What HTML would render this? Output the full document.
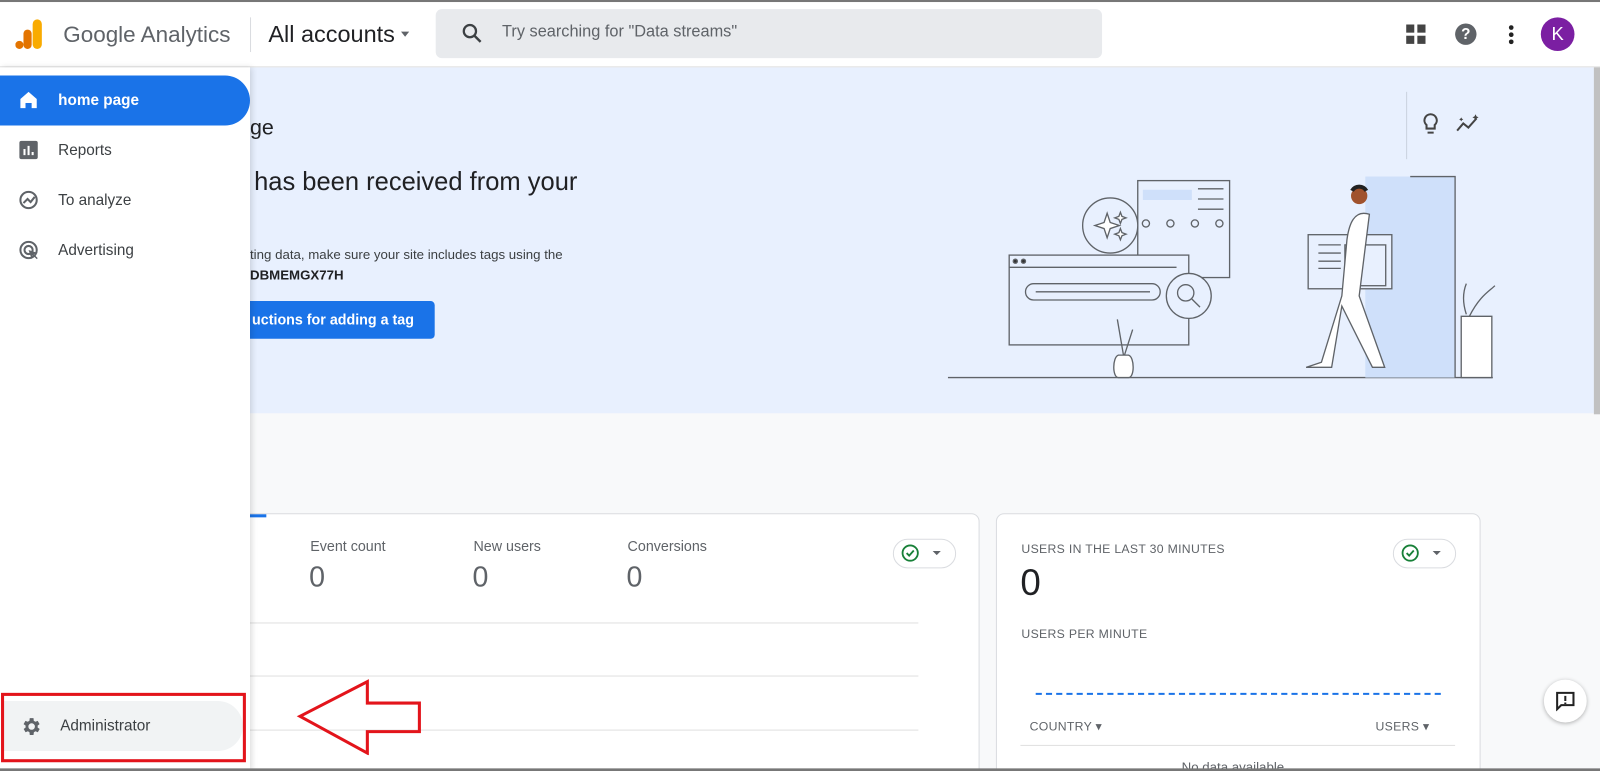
<!DOCTYPE html>
<html><head><meta charset="utf-8"><style>
*{box-sizing:border-box;margin:0;padding:0}
html,body{width:1600px;height:771px;overflow:hidden;background:#f8f9fa}
#wrap{position:absolute;left:0;top:0;width:1568px;height:756px;overflow:hidden;transform:scale(1.020408);transform-origin:0 0;font-family:"Liberation Sans",Arial,sans-serif;color:#202124;background:#f8f9fa}
.abs{position:absolute}
#hdr{left:0;top:0;width:1568px;height:66px;background:#fff;border-top:2px solid #777;border-bottom:1px solid #e0e0e0}
#banner{left:245px;top:66px;width:1317px;height:339px;background:#e8f0fe}
#side{left:0;top:66px;width:245px;height:690px;background:#fff;box-shadow:2px 0 6px rgba(0,0,0,.15)}
.nav{position:absolute;left:0;width:245px;height:49px;font-size:15px;color:#3c4043;display:flex;align-items:center;padding-left:57px}
.nav svg{position:absolute;left:18px;top:14px}
.card{background:#fff;border:1px solid #dadce0;border-radius:8px}
.lbl{font-size:14px;color:#5f6368}
.big{font-size:28px;color:#5f6368}
.up{font-size:12px;color:#5f6368;letter-spacing:.3px}
.chk{width:62px;height:29px;border:1px solid #dadce0;border-radius:15px;background:#fff}
</style></head><body><div id="wrap">
<div id="banner" class="abs"></div>
<div class="abs" style="left:1378px;top:90px;width:1px;height:66px;background:#c9d1de"></div>
<svg class="abs" style="left:1392px;top:110px" width="20" height="24" viewBox="0 0 20 24"><path d="M10 2a6 6 0 0 0-4 10.5V16h8v-3.5A6 6 0 0 0 10 2z" fill="none" stroke="#444" stroke-width="2"/><path d="M7 20h6" stroke="#444" stroke-width="2"/></svg>
<svg class="abs" style="left:1426px;top:110px" width="26" height="22" viewBox="0 0 26 22"><path d="M2 18l6-7 5 4 8-9" fill="none" stroke="#444" stroke-width="2"/><path d="M20 2l1 2 2 1-2 1-1 2-1-2-2-1 2-1zM6 5l.7 1.3L8 7l-1.3.7L6 9l-.7-1.3L4 7l1.3-.7z" fill="#444"/></svg>
<div class="abs" style="left:245px;top:114px;font-size:21px;color:#202124">ge</div>
<div class="abs" style="left:249px;top:164px;font-size:25px;color:#202124">has been received from your</div>
<div class="abs" style="left:245px;top:242px;font-size:13px;color:#3c4043">ting data, make sure your site includes tags using the</div>
<div class="abs" style="left:245px;top:262px;font-size:13px;font-weight:bold;color:#202124">DBMEMGX77H</div>
<div class="abs" style="left:225px;top:295px;width:201px;height:37px;background:#1a73e8;border-radius:4px;color:#fff;font-size:14px;font-weight:bold;padding:10px 0 0 22px">uctions for adding a tag</div>
<svg class="abs" style="left:920px;top:80px" width="560" height="300" viewBox="0 0 560 300" fill="none" stroke="#5f6368" stroke-width="1.3">
<line x1="9" y1="290" x2="543" y2="290"/>
<rect x="418" y="93" width="88" height="197" fill="#cfe0fa" stroke="none"/>
<path d="M462 93h44v197" />
<rect x="195" y="97" width="90" height="95" fill="#e8f0fe"/>
<rect x="200" y="106" width="48" height="10" fill="#cfe0fa" stroke="none"/>
<path d="M254 105h25M254 115h25M254 125h25"/>
<circle cx="203" cy="139" r="3.5"/><circle cx="227" cy="139" r="3.5"/><circle cx="251" cy="139" r="3.5"/><circle cx="275" cy="139" r="3.5"/>
<circle cx="168" cy="141" r="27" fill="#e8f0fe"/>
<path d="M165 129l3 9 9 3-9 3-3 9-3-9-9-3 9-3z M178 128l1.5 4 4 1.5-4 1.5-1.5 4-1.5-4-4-1.5 4-1.5z M178 144l1.5 4 4 1.5-4 1.5-1.5 4-1.5-4-4-1.5 4-1.5z" fill="#fff"/>
<rect x="69" y="170" width="176" height="88" fill="#e8f0fe"/>
<path d="M69 182h164"/><circle cx="75" cy="176" r="2" fill="#333"/><circle cx="83" cy="176" r="2" fill="#333"/>
<rect x="85" y="198" width="132" height="16" rx="8"/><path d="M95 206h112"/>
<circle cx="245" cy="210" r="22" fill="#e8f0fe"/><circle cx="242" cy="207" r="8"/><path d="M248 213l8 8"/>
<path d="M176 290c-6 0-6-20 0-22h10c6 2 6 22 0 22z" fill="#fff"/><path d="M181 268l-6-35M182 268l8-25"/>
<rect x="362" y="150" width="82" height="53" fill="#e8f0fe"/><path d="M372 160h22M372 168h22M372 176h22M372 183h22"/><rect x="398" y="160" width="40" height="40"/>
<path d="M422 130c-15-5-20 10-22 25l-5 55-20 65-15 5h25l10-60 30 60h12l-25-70z" fill="#fff"/>
<circle cx="412" cy="112" r="8" fill="#a0522d" stroke="none"/><path d="M405 107a8 8 0 0 1 14 0" stroke="#222" stroke-width="4"/>
<path d="M520 230c10-20 20-25 25-30M517 228c-5-15-2-25 0-30" />
<path d="M512 230h30v60h-30z" fill="#fff"/>
</svg>
<div id="hdr" class="abs"></div>
<svg class="abs" style="left:15px;top:18px" width="28" height="32" viewBox="0 0 28 32"><rect x="17" y="1" width="9" height="29" rx="4.5" fill="#f9ab00"/><rect x="8" y="11" width="8" height="19" rx="4" fill="#e37400"/><circle cx="4" cy="26" r="4" fill="#e37400"/></svg>
<div class="abs" style="left:62px;top:21px;font-size:22px;color:#5f6368">Google Analytics</div>
<div class="abs" style="left:245px;top:17px;width:1px;height:34px;background:#dadce0"></div>
<div class="abs" style="left:263px;top:20px;font-size:23px;color:#202124">All accounts</div>
<div class="abs" style="left:393px;top:31px;border:4px solid transparent;border-top:5px solid #5f6368"></div>
<div class="abs" style="left:427px;top:9px;width:653px;height:48px;background:#e8eaed;border-radius:6px"></div>
<svg class="abs" style="left:452px;top:22px" width="22" height="22" viewBox="0 0 22 22"><circle cx="8.5" cy="8.5" r="6" fill="none" stroke="#3c4043" stroke-width="2.2"/><path d="M13 13l6 6" stroke="#3c4043" stroke-width="2.4"/></svg>
<div class="abs" style="left:492px;top:23px;font-size:16px;color:#5f6368">Try searching for "Data streams"</div>
<svg class="abs" style="left:1378px;top:24px" width="20" height="20"><rect x="0" y="0" width="8" height="8" fill="#444"/><rect x="11" y="0" width="8" height="8" fill="#444"/><rect x="0" y="11" width="8" height="8" fill="#444"/><rect x="11" y="11" width="8" height="8" fill="#444"/></svg>
<div class="abs" style="left:1426px;top:23px;width:21px;height:21px;border-radius:50%;background:#5f6368;color:#fff;font-size:15px;font-weight:bold;text-align:center;line-height:21px">?</div>
<svg class="abs" style="left:1477px;top:24px" width="8" height="20"><circle cx="4" cy="3" r="2.3" fill="#222"/><circle cx="4" cy="10" r="2.3" fill="#222"/><circle cx="4" cy="17" r="2.3" fill="#222"/></svg>
<div class="abs" style="left:1510px;top:17px;width:33px;height:33px;border-radius:50%;background:#7b1fa2;color:#fff;font-size:18px;text-align:center;line-height:33px">K</div>
<div class="abs" style="left:1562px;top:66px;width:6px;height:340px;background:#c1c1c1"></div>
<div class="abs card" style="left:200px;top:503px;width:760px;height:280px">
 <div class="abs" style="left:0;top:0;width:60px;height:3px;background:#1a73e8"></div>
</div>
<div class="abs lbl" style="left:304px;top:527px">Event count</div><div class="abs big" style="left:303px;top:550px">0</div>
<div class="abs lbl" style="left:464px;top:527px">New users</div><div class="abs big" style="left:463px;top:550px">0</div>
<div class="abs lbl" style="left:615px;top:527px">Conversions</div><div class="abs big" style="left:614px;top:550px">0</div>
<div class="abs" style="left:245px;top:610px;width:655px;height:1px;background:#e0e0e0"></div>
<div class="abs" style="left:245px;top:662px;width:655px;height:1px;background:#e0e0e0"></div>
<div class="abs" style="left:245px;top:715px;width:655px;height:1px;background:#e0e0e0"></div>
<div class="abs chk" style="left:875px;top:528px"></div>
<div class="abs card" style="left:976px;top:503px;width:475px;height:280px"></div>
<div class="abs chk" style="left:1365px;top:528px"></div>
<svg class="abs" style="left:882px;top:533px" width="48" height="20"><circle cx="10" cy="9" r="7.5" fill="none" stroke="#188038" stroke-width="1.8"/><path d="M6.5 9l2.5 2.5 4.5-5" fill="none" stroke="#188038" stroke-width="1.8"/><path d="M32 7h8l-4 4z" fill="#5f6368"/></svg>
<svg class="abs" style="left:1372px;top:533px" width="48" height="20"><circle cx="10" cy="9" r="7.5" fill="none" stroke="#188038" stroke-width="1.8"/><path d="M6.5 9l2.5 2.5 4.5-5" fill="none" stroke="#188038" stroke-width="1.8"/><path d="M32 7h8l-4 4z" fill="#5f6368"/></svg>
<div class="abs up" style="left:1001px;top:531px">USERS IN THE LAST 30 MINUTES</div>
<div class="abs" style="left:1000px;top:550px;font-size:36px;color:#202124">0</div>
<div class="abs up" style="left:1001px;top:614px">USERS PER MINUTE</div>
<div class="abs" style="left:1015px;top:679px;width:397px;height:0;border-top:2px dashed #1a73e8"></div>
<div class="abs up" style="left:1009px;top:705px">COUNTRY ▾</div>
<div class="abs up" style="left:1348px;top:705px">USERS ▾</div>
<div class="abs" style="left:1000px;top:730px;width:426px;height:1px;background:#e0e0e0"></div>
<div class="abs" style="left:1158px;top:744px;font-size:13px;color:#5f6368">No data available</div>
<div class="abs" style="left:1513px;top:666px;width:42px;height:42px;border-radius:50%;background:#fff;box-shadow:0 1px 4px rgba(0,0,0,.3)"></div>
<svg class="abs" style="left:1524px;top:677px" width="20" height="20"><path d="M2 2h16v12H6l-4 4z" fill="none" stroke="#222" stroke-width="2"/><path d="M10 5v5M10 11.5v1.5" stroke="#222" stroke-width="2"/></svg>
<div id="side" class="abs">
 <div class="nav" style="top:8px;background:#1a73e8;color:#fff;font-weight:bold;border-radius:0 25px 25px 0">
  <svg width="20" height="20"><path d="M10 2L2 9v9h5v-5h6v5h5V9z" fill="#fff"/></svg>home page</div>
 <div class="nav" style="top:57px"><svg width="20" height="20"><rect x="1" y="1" width="18" height="18" rx="2" fill="#5f6368"/><path d="M6 15V9M10 15V6M14 15v-3" stroke="#fff" stroke-width="2"/></svg>Reports</div>
 <div class="nav" style="top:106px"><svg width="22" height="22"><circle cx="10" cy="10" r="8" fill="none" stroke="#5f6368" stroke-width="2"/><path d="M5 13l4-4 3 3 4-5" fill="none" stroke="#5f6368" stroke-width="2"/></svg>To analyze</div>
 <div class="nav" style="top:155px"><svg width="22" height="22"><circle cx="10" cy="10" r="8" fill="none" stroke="#5f6368" stroke-width="2"/><circle cx="10" cy="10" r="4" fill="none" stroke="#5f6368" stroke-width="2"/><path d="M10 10l9 3-4 1 4 4-1 1-4-4-1 4z" fill="#5f6368"/></svg>Advertising</div>
 <div class="nav" style="top:621px;left:2px;width:236px;background:#f1f3f4;border-radius:0 25px 25px 0"><svg width="22" height="22" viewBox="0 0 24 24"><path d="M19.4 13a7.5 7.5 0 0 0 0-2l2.1-1.6-2-3.5-2.5 1a7 7 0 0 0-1.7-1L15 3h-4l-.4 2.9a7 7 0 0 0-1.7 1l-2.5-1-2 3.5L6.6 11a7.5 7.5 0 0 0 0 2l-2.1 1.6 2 3.5 2.5-1a7 7 0 0 0 1.7 1L11 21h4l.4-2.9a7 7 0 0 0 1.7-1l2.5 1 2-3.5zM13 15.5a3.5 3.5 0 1 1 0-7 3.5 3.5 0 0 1 0 7z" fill="#5f6368" transform="translate(-1 0)"/></svg>Administrator</div>
</div>
<div class="abs" style="left:1px;top:679px;width:240px;height:68px;border:3px solid #e3141b"></div>
<svg class="abs" style="left:290px;top:665px" width="125" height="75" viewBox="0 0 125 75"><path d="M4 37L70 3v21h51v28H70v21z" fill="none" stroke="#e3141b" stroke-width="3"/></svg>
<div class="abs" style="left:0;top:753px;width:1568px;height:3px;background:#777"></div>
</div></body></html>
